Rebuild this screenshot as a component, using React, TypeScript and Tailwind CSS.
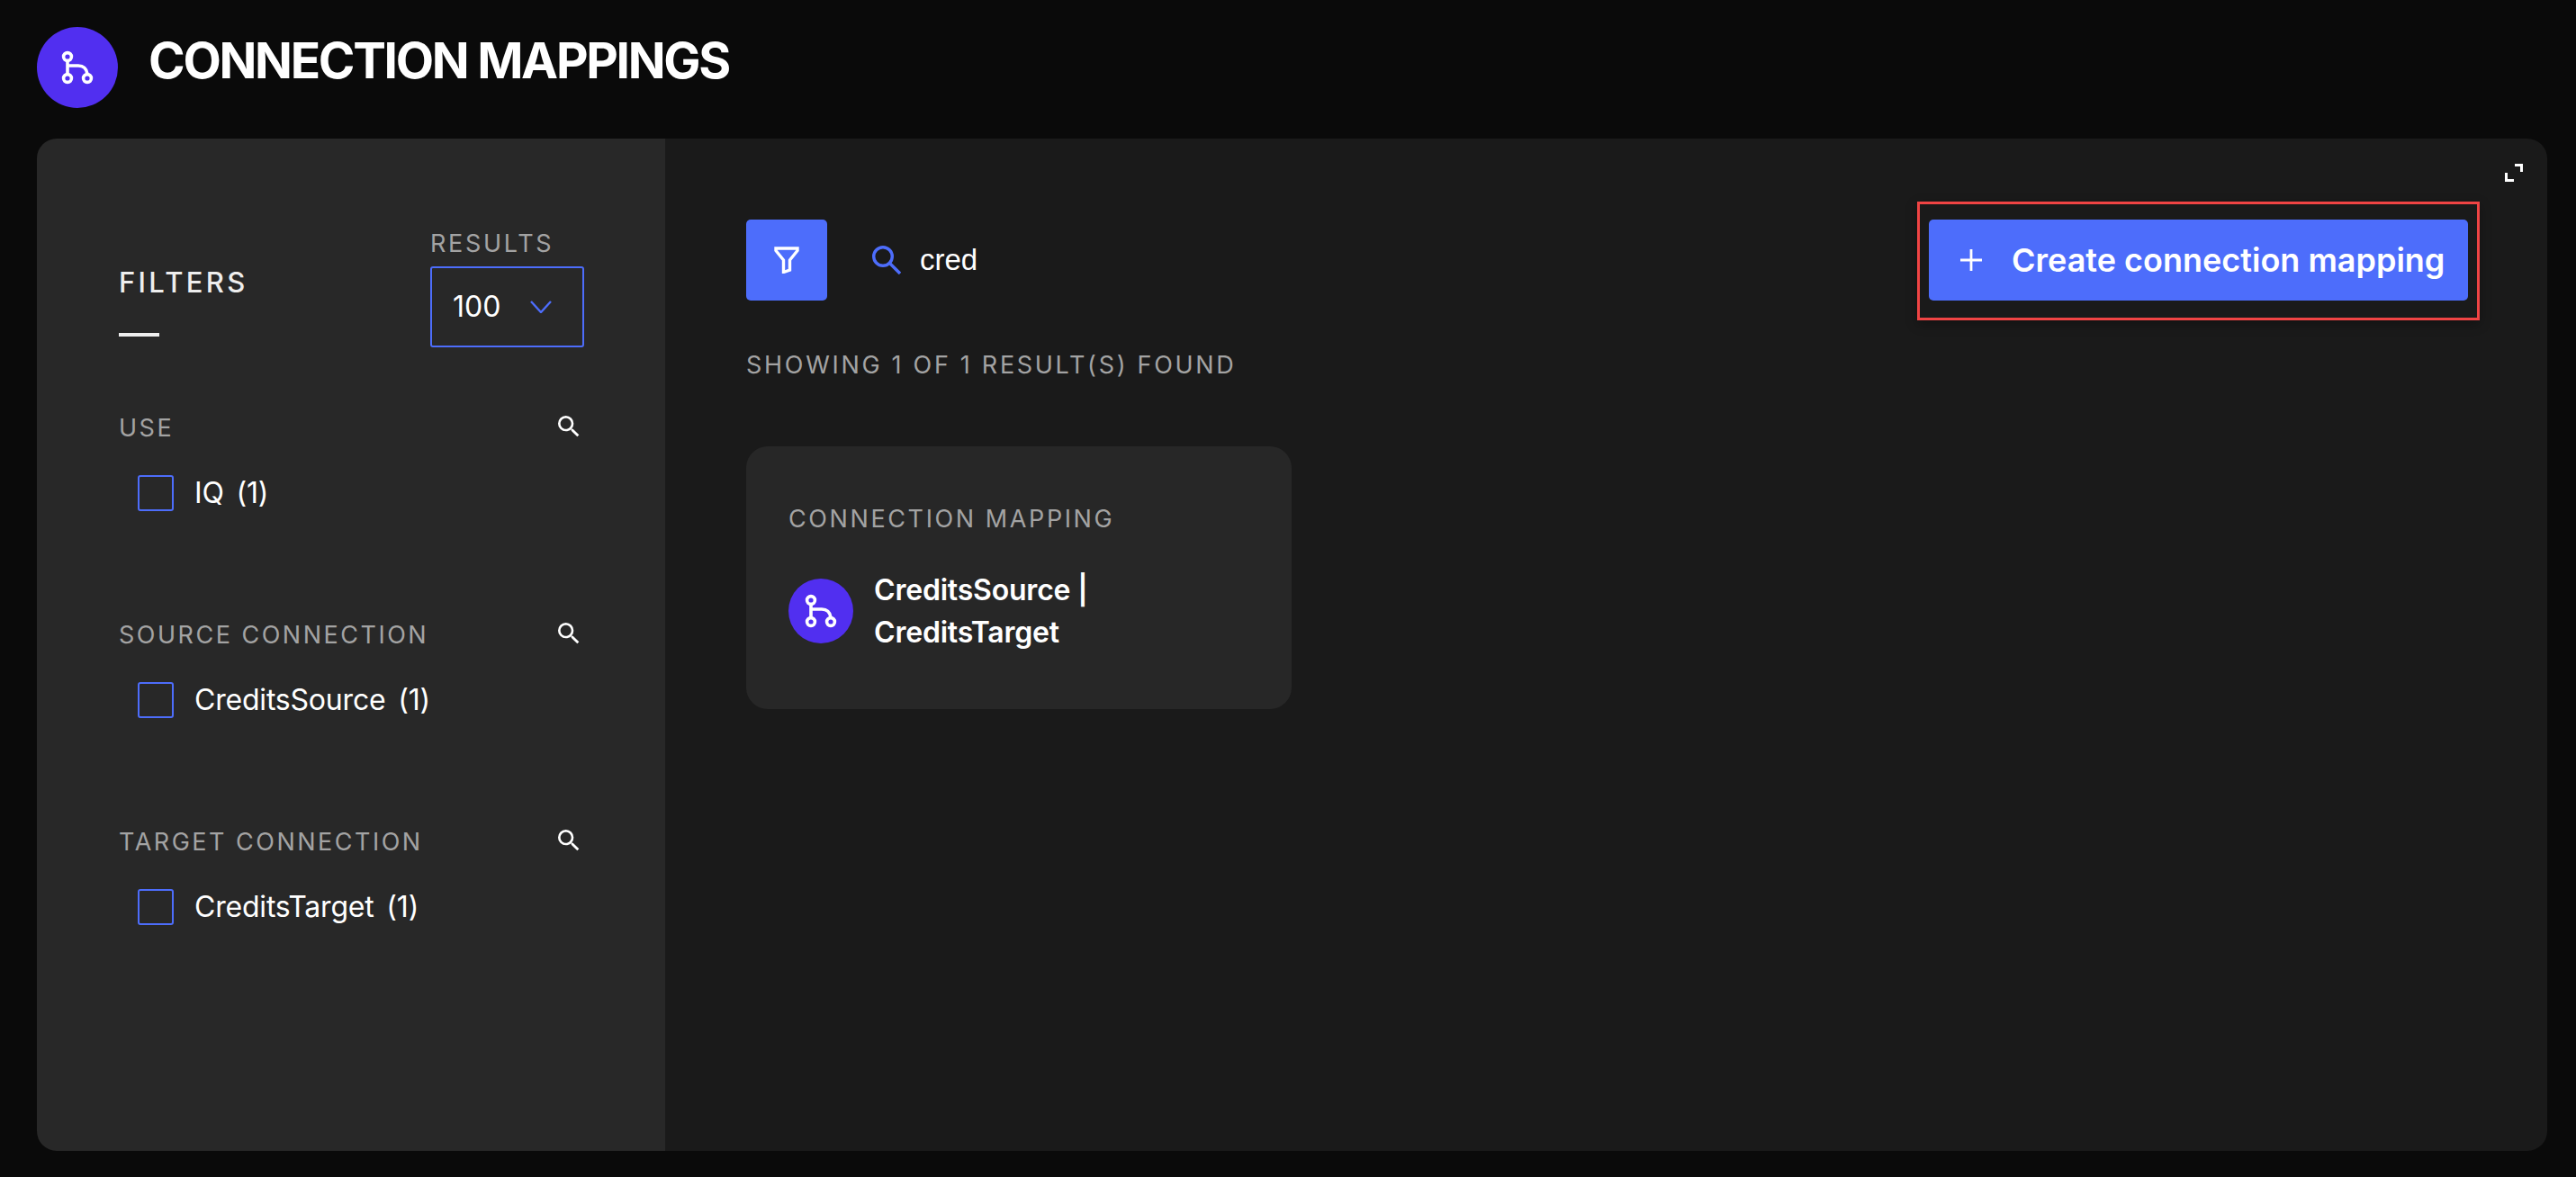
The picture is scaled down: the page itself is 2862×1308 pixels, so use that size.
import { MdSearch } from 'react-icons/md';

const inter = 'font-["Inter",sans-serif]';

// rings stay the same size in both badges, only the circle behind them changes
function MappingIcon({ size }: { size: number }) {
  const offset = (90 - size) / 2;
  return (
    <svg width={size} height={size} viewBox={`${offset} ${offset} ${size} ${size}`} fill="none" stroke="white" strokeWidth="3.6">
      <circle cx="34" cy="33" r="4.4" />
      <circle cx="34" cy="57" r="4.4" />
      <circle cx="56" cy="57" r="4.4" />
      <path d="M34 38V52M34 43H46C51 43 55 46 56 52" />
    </svg>
  );
}

function FilterSection({ title, name }: { title: string; name: string }) {
  return (
    <section className="h-[230px]">
      <div className="flex h-[34px] items-center justify-between">
        <span className="text-[27px] leading-[34px] tracking-[2.5px] text-[#a3a3a3]">{title}</span>
        <MdSearch size={32} color="white" className="mr-[1px] mt-[-4px]" />
      </div>
      <label className="ml-[21px] mt-[35px] flex items-center gap-[23px]">
        <span className="h-[40px] w-[40px] rounded-[3px] border-2 border-[#4d6dfb]" />
        <span className="text-[32px] leading-[40px] tracking-[-0.2px] text-white">
          {name} <span className="ml-[5px]">(1)</span>
        </span>
      </label>
    </section>
  );
}

function Sidebar() {
  return (
    <aside className="h-full w-[698px] shrink-0 bg-[#282828] pl-[91px] pr-[90px] pt-[98px]">
      <div className="flex justify-between">
        <div className="pt-[43px]">
          <h2 className="text-[31px] font-medium leading-[38px] tracking-[3.3px] text-[#eeeeee]">FILTERS</h2>
          <div className="mt-[37px] h-[4px] w-[45px] bg-[#eeeeee]" />
        </div>
        <div className="w-[171px]">
          <div className="pt-[2px] text-[27px] leading-[34px] tracking-[0.1em] text-[#a3a3a3]">RESULTS</div>
          <div className="mt-[8px] flex h-[90px] items-center justify-between rounded-[3px] border-2 border-[#4d6dfb] pl-[23px] pr-[34px]">
            <span className="text-[32px] text-white">100</span>
            <svg width="24" height="14" viewBox="0 0 24 14" fill="none" stroke="#4d6dfb" strokeWidth="2.4">
              <path d="M1 1L12 13L23 1" />
            </svg>
          </div>
        </div>
      </div>
      <div className="mt-[73px]">
        <FilterSection title="USE" name="IQ" />
        <FilterSection title="SOURCE CONNECTION" name="CreditsSource" />
        <FilterSection title="TARGET CONNECTION" name="CreditsTarget" />
      </div>
    </aside>
  );
}

function MainContent() {
  return (
    <main className="relative h-full flex-1 bg-[#1a1a1a] pl-[90px] pr-[75px] pt-[70px]">
      <svg className="absolute right-[27px] top-[28px]" width="20" height="20" viewBox="0 0 20 20" fill="none" stroke="white" strokeWidth="3">
        <path d="M11 1.5H18.5V9" />
        <path d="M1.5 10V18.5H10" />
      </svg>

      <div className="flex items-start justify-between">
        <div>
          <div className="mt-[20px] flex items-center">
            <button className="flex h-[90px] w-[90px] items-center justify-center rounded-[5px] bg-[#4d6dfb]">
              <svg width="28" height="30" viewBox="0 0 28 30" fill="none" stroke="white" strokeWidth="3.4">
                <path d="M2 2H26V4.5L17.5 15V26L10.5 28.5V15L2 4.5Z" />
              </svg>
            </button>
            <svg className="ml-[50px]" width="32" height="32" viewBox="0 0 32 32" fill="none" stroke="#4d6dfb" strokeWidth="3.4">
              <circle cx="12" cy="12" r="10.3" />
              <path d="M19.5 19.5L31 31" />
            </svg>
            <span className="ml-[21px] font-['Liberation_Sans',sans-serif] text-[33px] text-white">cred</span>
          </div>
          <p className="mt-[55px] text-[27px] leading-[34px] tracking-[0.1em] text-[#a3a3a3]">SHOWING 1 OF 1 RESULT(S) FOUND</p>
        </div>
        <div className="border-[3px] border-[#f04444] px-[10px] pb-[19px] pt-[17px] shadow-[0_4px_12px_rgba(0,0,0,0.3)]">
          <button className="flex h-[90px] w-[599px] items-center rounded-[5px] bg-[#4d6dfb] pl-[35px] text-[36px] font-semibold text-white">
            <svg width="24" height="24" viewBox="0 0 24 24" fill="none" stroke="white" strokeWidth="2.8">
              <path d="M12 0V24M0 12H24" />
            </svg>
            <span className="ml-[33px]">Create connection mapping</span>
          </button>
        </div>
      </div>

      <article className="mt-[73px] h-[292px] w-[606px] rounded-[24px] bg-[#272727] px-[47px] pt-[64px]">
        <div className="text-[27px] leading-[34px] tracking-[2.6px] text-[#a3a3a3]">CONNECTION MAPPING</div>
        <div className="mt-[38px] flex items-center gap-[23px]">
          <div className="flex h-[72px] w-[72px] shrink-0 items-center justify-center rounded-full bg-[#512ff0]">
            <MappingIcon size={72} />
          </div>
          <div className="w-[300px] text-[32px] font-semibold leading-[47px] tracking-[-0.2px] text-white">CreditsSource | CreditsTarget</div>
        </div>
      </article>
    </main>
  );
}

export default function App() {
  return (
    <div className={`h-[1308px] w-[2862px] overflow-hidden bg-[#0a0a0a] ${inter}`}>
      <header className="flex h-[154px] items-start pl-[41px] pt-[30px]">
        <div className="flex h-[90px] w-[90px] items-center justify-center rounded-full bg-[#512ff0]">
          <MappingIcon size={90} />
        </div>
        <h1 className="ml-[34px] mt-[2px] text-[55px] font-bold leading-[70px] tracking-[-2.3px] text-white">CONNECTION MAPPINGS</h1>
      </header>
      <div className="ml-[41px] mr-[32px] flex h-[1125px] overflow-hidden rounded-[22px]">
        <Sidebar />
        <MainContent />
      </div>
    </div>
  );
}
